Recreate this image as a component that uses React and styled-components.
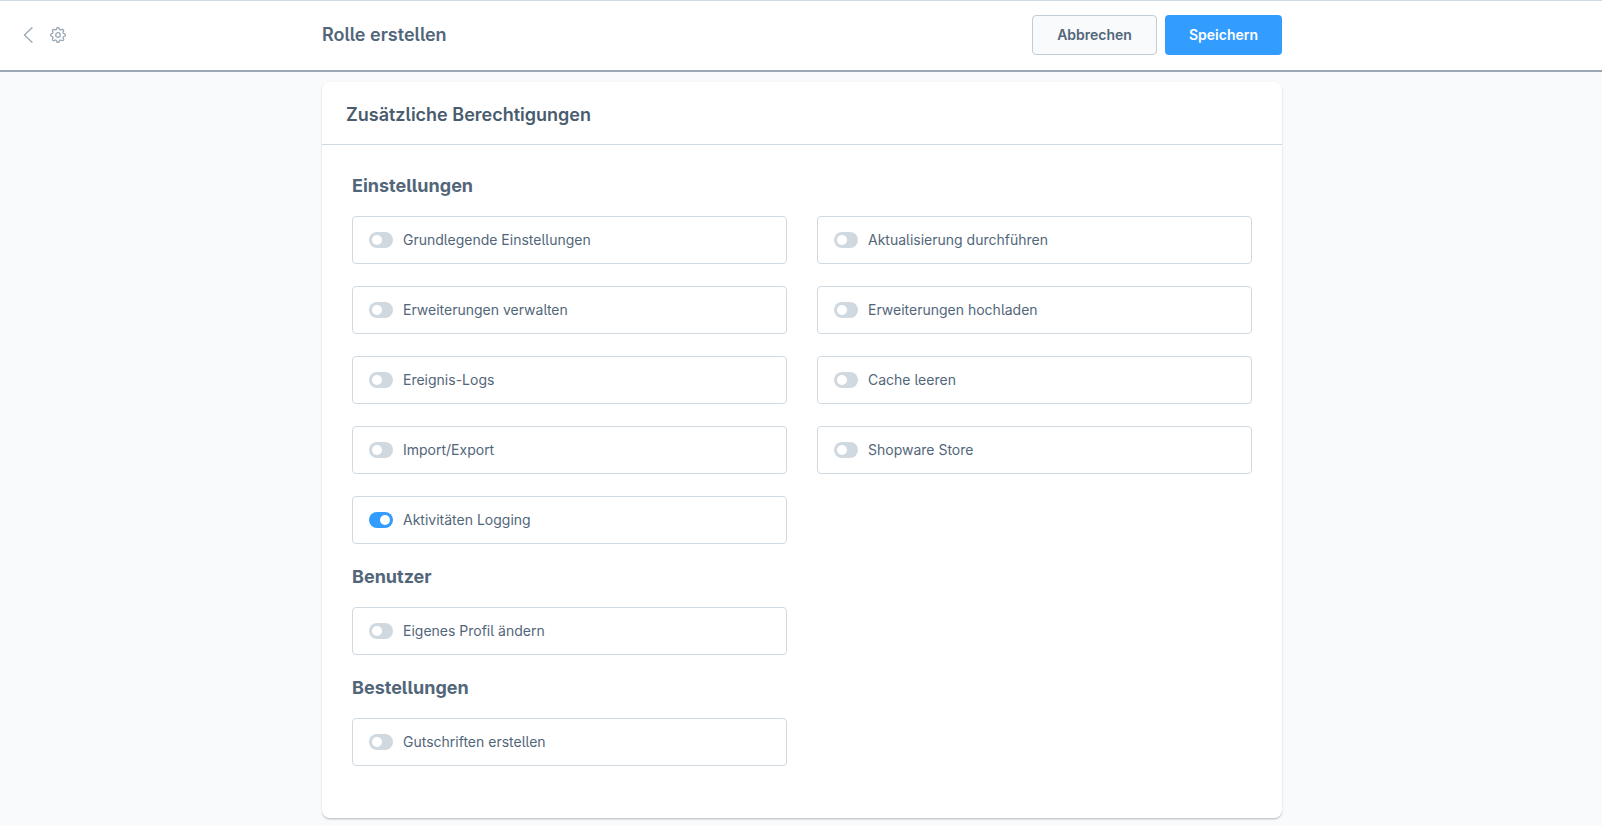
import React, { useState } from 'react'
import styled, { createGlobalStyle } from 'styled-components'

const groups = [
  {
    title: 'Einstellungen',
    items: [
      'Grundlegende Einstellungen',
      'Aktualisierung durchführen',
      'Erweiterungen verwalten',
      'Erweiterungen hochladen',
      'Ereignis-Logs',
      'Cache leeren',
      'Import/Export',
      'Shopware Store',
      'Aktivitäten Logging',
    ],
  },
  { title: 'Benutzer', items: ['Eigenes Profil ändern'] },
  { title: 'Bestellungen', items: ['Gutschriften erstellen'] },
]

// 8 Zähne, Radius wechselt weich zwischen innen und außen
const gearPath = () => {
  const points = []
  for (let i = 0; i < 96; i++) {
    const a = (i / 96) * Math.PI * 2
    const wave = Math.tanh(2 * Math.cos(a * 8))
    const r = 6.5 + wave * 0.9
    points.push(`${(8 + r * Math.sin(a)).toFixed(2)} ${(8 - r * Math.cos(a)).toFixed(2)}`)
  }
  return `M${points.join('L')}Z`
}

function App() {
  const [active, setActive] = useState(['Aktivitäten Logging'])

  const toggle = (name) => {
    setActive(active.includes(name) ? active.filter(el => el !== name) : [...active, name])
  }

  return (
    <>
      <GlobalStyle />
      <Page>
        <Header>
          <Nav>
            <IconLink href="#" aria-label="Zurück">
              <svg width="16" height="16" viewBox="0 0 16 16">
                <path d="M12 0.7L4.4 8l7.6 7.3" />
              </svg>
            </IconLink>
            <IconLink href="#" aria-label="Einstellungen">
              <svg width="16" height="16" viewBox="0 0 16 16">
                <path d={gearPath()} />
                <circle cx="8" cy="8" r="2.3" />
              </svg>
            </IconLink>
          </Nav>
          <HeaderContent>
            <PageTitle>Rolle erstellen</PageTitle>
            <Actions>
              <Button type="button">Abbrechen</Button>
              <Button type="button" $primary>Speichern</Button>
            </Actions>
          </HeaderContent>
        </Header>
        <Main>
          <Card>
            <CardHeader>
              <CardTitle>Zusätzliche Berechtigungen</CardTitle>
            </CardHeader>
            <CardBody>
              {groups.map(group => (
                <section key={group.title}>
                  <GroupTitle>{group.title}</GroupTitle>
                  <Grid>
                    {group.items.map(name => (
                      <Permission key={name}>
                        <Switch
                          type="checkbox"
                          checked={active.includes(name)}
                          onChange={() => toggle(name)}
                        />
                        {name}
                      </Permission>
                    ))}
                  </Grid>
                </section>
              ))}
            </CardBody>
          </Card>
        </Main>
      </Page>
    </>
  )
}

export default App

const GlobalStyle = createGlobalStyle`
  * {
    box-sizing: border-box;
  }
  body {
    margin: 0;
    background: #f9fafb;
    color: #52667a;
    font-family: Inter, "Liberation Sans", sans-serif;
    font-size: 14px;
    line-height: 16px;
    font-feature-settings: "cv05";
  }
`

const Page = styled.div`
  min-height: 100vh;
  padding-left: 2px;
  background: #f9fafb;
`

const Header = styled.header`
  display: grid;
  grid-template-columns: 1fr minmax(0, 960px) 1fr;
  align-items: center;
  height: 72px;
  margin-left: -2px;
  padding: 0 0 1px 2px;
  background: #fff;
  border-top: 1px solid #d1d9e0;
  border-bottom: 2px solid #9aa8b5;
`

const Nav = styled.nav`
  display: flex;
  gap: 14px;
  padding-left: 18px;
`

const IconLink = styled.a`
  display: flex;

  svg {
    fill: none;
    stroke: #9aa8b5;
    stroke-width: 1.3;
    stroke-linecap: round;
    stroke-linejoin: round;
  }
`

const HeaderContent = styled.div`
  display: flex;
  align-items: center;
  justify-content: space-between;
`

const PageTitle = styled.h1`
  margin: 0;
  font-size: 18px;
  font-weight: 600;
  line-height: 26px;
`

const Actions = styled.div`
  display: flex;
  gap: 8px;
`

const Button = styled.button`
  height: 40px;
  padding: 0 24px;
  border: ${props => (props.$primary ? '0' : '1px solid #c2ccd6')};
  border-radius: 4px;
  background: ${props => (props.$primary ? '#329dff' : '#f9fafb')};
  color: ${props => (props.$primary ? '#fff' : '#52667a')};
  font: inherit;
  font-weight: 600;
  cursor: pointer;
`

const Main = styled.main`
  padding: 10px 0 8px;
`

const Card = styled.div`
  max-width: 960px;
  margin: 0 auto;
  background: #fff;
  border-radius: 8px;
  box-shadow: 0 1px 1px rgba(0, 0, 0, 0.08), 0 2px 1px rgba(0, 0, 0, 0.06), 0 1px 3px rgba(0, 0, 0, 0.1);
`

const CardHeader = styled.div`
  display: flex;
  align-items: center;
  height: 63px;
  padding: 4px 24px 0;
  border-bottom: 1px solid #d1d9e0;
`

const CardTitle = styled.h2`
  margin: 0;
  color: #485c6e;
  font-size: 18px;
  font-weight: 600;
  line-height: 26px;
`

const CardBody = styled.div`
  padding: 30px;
`

const GroupTitle = styled.h3`
  margin: 0 0 20px;
  font-size: 18px;
  font-weight: 700;
  line-height: 21px;
`

const Grid = styled.div`
  display: grid;
  grid-template-columns: repeat(2, 1fr);
  column-gap: 30px;
`

const Permission = styled.label`
  display: flex;
  align-items: center;
  gap: 10px;
  height: 48px;
  margin-bottom: 22px;
  padding: 0 16px;
  border: 1px solid #d1d9e0;
  border-radius: 4px;
  cursor: pointer;
`

const Switch = styled.input`
  display: flex;
  appearance: none;
  width: 24px;
  height: 16px;
  margin: 0;
  padding: 3px;
  border-radius: 8px;
  background: #d1d9e0;
  cursor: pointer;

  &::before {
    content: '';
    width: 10px;
    height: 10px;
    border-radius: 50%;
    background: #fff;
  }

  &:checked {
    justify-content: flex-end;
    background: #329dff;
  }
`
